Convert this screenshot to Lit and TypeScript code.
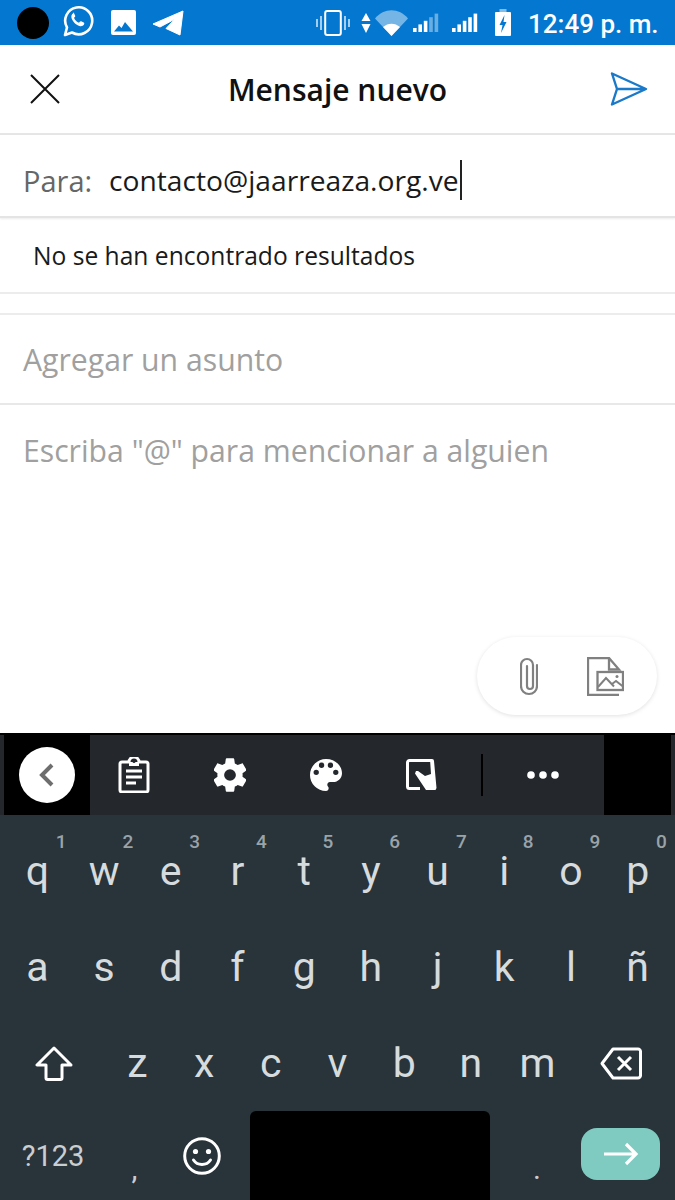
import { LitElement, html, css, svg } from 'lit';
import { customElement } from 'lit/decorators.js';

const row1 = ['q', 'w', 'e', 'r', 't', 'y', 'u', 'i', 'o', 'p'];
const hints = ['1', '2', '3', '4', '5', '6', '7', '8', '9', '0'];
const row2 = ['a', 's', 'd', 'f', 'g', 'h', 'j', 'k', 'l', 'ñ'];
const row3 = ['z', 'x', 'c', 'v', 'b', 'n', 'm'];

const signal = (lit: number) => {
  const bars = [0, 1, 2, 3, 4];
  return svg`${bars.map((i) => {
    const h = 4 + i * 3.6;
    return svg`<rect x=${i * 5.4} y=${19 - h} width="3.6" height=${h} fill="#fff" opacity=${i < lit ? 1 : 0.4}></rect>`;
  })}`;
};

@customElement('app-root')
export class AppRoot extends LitElement {
  static styles = css`
    :host {
      display: block;
      width: 675px;
      height: 1200px;
      overflow: hidden;
      background: #fff;
      font-family: 'Open Sans', 'Noto Sans', sans-serif;
    }

    .page {
      display: flex;
      flex-direction: column;
      height: 1200px;
    }

    svg {
      display: block;
      flex: none;
    }

    /* status bar */
    .status {
      display: flex;
      align-items: center;
      height: 45px;
      flex: none;
      background: #0478d0;
      color: #fff;
    }

    .dot {
      width: 32px;
      height: 32px;
      margin-left: 17px;
      border-radius: 50%;
      background: #000;
    }

    .wa { margin-left: 13px; margin-top: -3px; }
    .gallery { margin-left: 17px; }
    .tg { margin-left: 16px; }
    .vibrate { margin-left: 132px; }
    .updown { margin-left: 11px; }
    .wifi { margin-left: 4px; }
    .sig1 { margin-left: 5px; }
    .sig2 { margin-left: 13px; }
    .batt { margin-left: 17px; }

    .time {
      margin: 2px 0 0 17px;
      font-family: Roboto, sans-serif;
      font-size: 26px;
      font-weight: 500;
      white-space: nowrap;
    }

    /* compose header */
    .head {
      display: flex;
      align-items: center;
      justify-content: space-between;
      height: 88px;
      flex: none;
      padding: 0 27px 0 30px;
      border-bottom: 2px solid #e6e6e6;
    }

    .title {
      margin-left: 5px;
      font-size: 30px;
      font-weight: 600;
      color: #111;
    }

    .field {
      display: flex;
      align-items: center;
      flex: none;
      padding-left: 23px;
      font-size: 30.2px;
    }

    .to {
      height: 72px;
      padding-top: 9px;
      border-bottom: 2px solid #e4e4e4;
      box-shadow: 0 1px 2px rgba(0, 0, 0, 0.08);
    }

    .label {
      width: 86px;
      font-size: 29px;
      color: #666;
    }

    .value {
      font-size: 28.2px;
      color: #1a1a1a;
      padding-right: 1px;
      border-right: 2px solid #222;
      line-height: 40px;
    }

    .none {
      height: 74px;
      padding-left: 33px;
      font-size: 24.6px;
      color: #1a1a1a;
      border-bottom: 2px solid #ececec;
    }

    .spacer {
      height: 19px;
      flex: none;
      border-bottom: 2px solid #ececec;
    }

    .subject {
      height: 87px;
      padding-top: 1px;
      color: #a0a0a0;
      border-bottom: 2px solid #e8e8e8;
    }

    .body {
      flex: 1;
      display: flex;
      flex-direction: column;
      justify-content: space-between;
      padding: 25px 18px 18px 23px;
      font-size: 30.2px;
      color: #a0a0a0;
    }

    .fab {
      display: flex;
      align-items: center;
      align-self: flex-end;
      gap: 49px;
      height: 78px;
      padding: 0 33px 0 43px;
      border-radius: 39px;
      background: #fff;
      box-shadow: 0 1px 4px rgba(0, 0, 0, 0.12);
    }

    /* keyboard */
    .kbd {
      flex: none;
      height: 467px;
      border-top: 2px solid #000;
      box-sizing: border-box;
      background: #29333a;
      color: #d6dbde;
      font-family: Roboto, sans-serif;
    }

    .tools {
      display: flex;
      align-items: center;
      height: 80px;
      padding: 0 4px;
      background: #24282d;
    }

    .back {
      display: flex;
      align-items: center;
      justify-content: center;
      width: 86px;
      height: 80px;
      margin-right: 28px;
      background: #000;
    }

    .back span {
      display: flex;
      align-items: center;
      justify-content: center;
      width: 56px;
      height: 56px;
      border-radius: 50%;
      background: #fff;
    }

    .tool { margin-right: 64px; }
    .touch { margin-right: 43px; }

    .divider {
      width: 2px;
      height: 42px;
      margin-right: 44px;
      background: #000;
    }

    .blackout {
      width: 67px;
      height: 80px;
      margin-left: auto;
      background: #000;
    }

    .row {
      display: grid;
      grid-template-columns: repeat(10, 1fr);
      height: 96px;
      padding: 0 4px;
    }

    .row.third {
      grid-template-columns: 1.5fr repeat(7, 1fr) 1.5fr;
    }

    .key {
      position: relative;
      display: flex;
      align-items: center;
      justify-content: center;
      padding-top: 16px;
      font-size: 41px;
      line-height: 1;
    }

    .hint {
      position: absolute;
      top: 17px;
      right: 3px;
      width: 13px;
      text-align: center;
      font-size: 19px;
      font-weight: 500;
      color: #9aa3a8;
    }

    .bottom {
      display: flex;
      align-items: stretch;
      height: 97px;
    }

    .sym, .comma, .emoji, .period {
      display: flex;
      align-items: center;
      justify-content: center;
      flex: none;
    }

    .sym {
      width: 106px;
      padding-top: 8px;
      font-size: 29px;
      color: #c9ced1;
    }

    .comma, .period {
      width: 67px;
      padding-top: 34px;
      font-size: 30px;
      color: #c9ced1;
    }

    .comma { margin-left: -5px; }
    .emoji { width: 67px; padding-top: 8px; }

    .space {
      width: 240px;
      margin: 8px 14px 0 15px;
      border-radius: 6px 6px 0 0;
      background: #000;
    }

    .period { width: 66px; }

    .enter {
      display: flex;
      align-items: center;
      justify-content: center;
      width: 79px;
      height: 52px;
      margin: 25px 0 0 11px;
      border-radius: 16px;
      background: #7fcbc2;
    }
  `;

  render() {
    return html`
      <div class="page">
        <div class="status">
          <div class="dot"></div>
          <svg class="wa" width="32" height="32" viewBox="0 0 32 32">
            <path d="M3 30l2-7.5A13.5 13.5 0 1 1 10 27.5z" fill="none" stroke="#fff" stroke-width="2.6" stroke-linejoin="round"></path>
            <path d="M11 8.500c-1.500 1-2 2.600-1.500 4.500 1 3.500 4.500 7 8 8 2 .5 3.500 0 4.500-1.500.5-1 .3-1.500-.3-1.900l-2.500-1.300c-.6-.3-1-.1-1.400.4l-.8 1c-2.500-.9-4-2.500-5-5l.9-.8c.4-.4.5-.8.2-1.300l-1.200-2.500c-.3-.6-.9-.7-.9-.6z" fill="#fff"></path>
          </svg>
          <svg class="gallery" width="25" height="25" viewBox="0 0 25 25">
            <rect width="25" height="25" rx="2" fill="#fff"></rect>
            <path d="M3 21.500l5-6 2.500 2.500 3.500-6 8 9.500z" fill="#0478d0"></path>
          </svg>
          <svg class="tg" width="32" height="26" viewBox="0 0 32 26">
            <path d="M1 14L31 1l-3 24-14-6.500 9-9.500-15 8z" fill="#fff" stroke="#fff" stroke-linejoin="round"></path>
          </svg>
          <svg class="vibrate" width="34" height="26" viewBox="0 0 34 26">
            <rect x="9.200" y="1" width="15.600" height="24" rx="2" fill="none" stroke="#fff" stroke-width="2"></rect>
            <path d="M1 9v8M5 6v14M29 6v14M33 9v8" stroke="#fff" stroke-width="1.600" opacity=".8"></path>
          </svg>
          <svg class="updown" width="10" height="20" viewBox="0 0 10 20">
            <path d="M5 0l4.500 8H.5zM5 20L.5 11h9z" fill="#fff"></path>
          </svg>
          <svg class="wifi" width="33" height="26" viewBox="0 0 33 26">
            <path d="M0 8.500C9-2.500 24-2.500 33 8.500L16.500 26z" fill="#fff" opacity=".45"></path>
            <path d="M8 17c5-4.500 12-4.500 17 0l-8.500 9z" fill="#fff"></path>
          </svg>
          <svg class="sig1" width="26" height="19" viewBox="0 0 26 19">${signal(3)}</svg>
          <svg class="sig2" width="26" height="19" viewBox="0 0 26 19">${signal(5)}</svg>
          <svg class="batt" width="16" height="27" viewBox="0 0 16 27">
            <rect x="4.500" width="7" height="3" fill="#fff" opacity=".5"></rect>
            <rect y="3" width="16" height="24" rx="1" fill="#fff"></rect>
            <path d="M9.500 6L4.500 16h3l-1.500 8 5.500-11h-3z" fill="#0478d0"></path>
          </svg>
          <span class="time">12:49 p. m.</span>
        </div>

        <div class="head">
          <svg width="30" height="30" viewBox="0 0 30 30">
            <path d="M1 1l28 28M29 1L1 29" stroke="#111" stroke-width="2" fill="none"></path>
          </svg>
          <span class="title">Mensaje nuevo</span>
          <svg width="38" height="34" viewBox="0 0 38 34">
            <path d="M2 1.500L36 17 2 32.500 7 17zM7 17h29" fill="none" stroke="#1a79c8" stroke-width="2.400" stroke-linejoin="round"></path>
          </svg>
        </div>

        <div class="field to">
          <span class="label">Para:</span>
          <span class="value">contacto@jaarreaza.org.ve</span>
        </div>
        <div class="field none">No se han encontrado resultados</div>
        <div class="spacer"></div>
        <div class="field subject">Agregar un asunto</div>

        <div class="body">
          <span>Escriba "@" para mencionar a alguien</span>
          <div class="fab">
            <svg width="18" height="39" viewBox="0 0 18 39">
              <path d="M17 8v21a8 8 0 0 1-16 0V8a6 6 0 0 1 12 0v21a3 3 0 0 1-6 0V9" fill="none" stroke="#808080" stroke-width="2.200" stroke-linecap="round"></path>
            </svg>
            <svg width="37" height="39" viewBox="0 0 37 39">
              <path d="M32 38H1V1h21l10 11.500H22V1" fill="none" stroke="#808080" stroke-width="2.300"></path>
              <rect x="10.500" y="15" width="25.500" height="18" fill="none" stroke="#808080" stroke-width="2.300"></rect>
              <path d="M11 30l8-9 8 8.500M25 27l4-3 7 5.500" fill="none" stroke="#808080" stroke-width="2"></path>
              <circle cx="30" cy="19.500" r="1.500" fill="#808080"></circle>
            </svg>
          </div>
        </div>

        <div class="kbd">
          <div class="tools">
            <div class="back">
              <span>
                <svg width="18" height="24" viewBox="0 0 18 24">
                  <path d="M14 2L4 12l10 10" fill="none" stroke="#6e6e6e" stroke-width="4"></path>
                </svg>
              </span>
            </div>
            <svg class="tool" width="32" height="36" viewBox="0 0 32 36">
              <path d="M4 5h7a5 5 0 0 1 10 0h7a2 2 0 0 1 2 2v26a2 2 0 0 1-2 2H4a2 2 0 0 1-2-2V7a2 2 0 0 1 2-2z" fill="none" stroke="#fff" stroke-width="3"></path>
              <rect x="11" y="5" width="10" height="4" fill="#fff"></rect>
              <circle cx="16" cy="4.500" r="1.500" fill="#24282d"></circle>
              <path d="M8 14h16M8 20h16M8 26h10" stroke="#fff" stroke-width="3"></path>
            </svg>
            <svg class="tool" width="32" height="34" viewBox="2.500 1.800 19 20.400" preserveAspectRatio="none">
              <path fill="#fff" d="M19.430 12.980c.04-.32.07-.64.070-.98s-.03-.66-.07-.98l2.110-1.650c.19-.15.24-.42.120-.64l-2-3.460c-.12-.22-.39-.3-.61-.22l-2.490 1c-.52-.4-1.080-.73-1.690-.98l-.38-2.650A.488.488 0 0 0 14 2h-4c-.25 0-.46.18-.49.420l-.38 2.650c-.61.25-1.170.59-1.690.98l-2.490-1c-.23-.09-.49 0-.61.220l-2 3.460c-.13.220-.07.490.12.640l2.110 1.650c-.04.320-.07.650-.07.980s.03.660.07.980l-2.110 1.650c-.19.150-.24.420-.12.640l2 3.460c.12.220.39.300.61.220l2.490-1c.52.400 1.080.730 1.690.980l.38 2.650c.03.240.24.420.49.420h4c.25 0 .46-.18.49-.42l.38-2.650c.61-.25 1.170-.59 1.690-.98l2.490 1c.23.090.49 0 .61-.22l2-3.460c.12-.22.07-.49-.12-.64l-2.110-1.650zM12 15.500a3.500 3.500 0 1 1 0-7 3.500 3.500 0 0 1 0 7z"></path>
            </svg>
            <svg class="tool" width="32" height="32" viewBox="3 3 18 18">
              <path fill="#fff" d="M12 3a9 9 0 0 0 0 18c.83 0 1.500-.67 1.500-1.500 0-.39-.15-.74-.39-1.010-.23-.26-.38-.61-.38-.99 0-.83.67-1.500 1.500-1.500H16c2.760 0 5-2.240 5-5 0-4.420-4.030-8-9-8zm-5.500 9a1.500 1.500 0 1 1 0-3 1.500 1.500 0 0 1 0 3zm3-4a1.500 1.500 0 1 1 0-3 1.500 1.500 0 0 1 0 3zm5 0a1.500 1.500 0 1 1 0-3 1.500 1.500 0 0 1 0 3zm3 4a1.500 1.500 0 1 1 0-3 1.500 1.500 0 0 1 0 3z"></path>
            </svg>
            <svg class="tool touch" width="32" height="32" viewBox="0 0 32 32">
              <path d="M14 29.500H3.500a2 2 0 0 1-2-2V3.500a2 2 0 0 1 2-2H25" fill="none" stroke="#fff" stroke-width="3"></path>
              <path d="M24 0h2a2 2 0 0 1 2 2l2.500 27-1 2H20l-2-3-9-13.500 1-2.500h2l7 5 6-2z" fill="#fff"></path>
            </svg>
            <div class="divider"></div>
            <svg width="32" height="8" viewBox="0 0 32 8">
              <circle cx="4" cy="4" r="3.800" fill="#fff"></circle>
              <circle cx="16" cy="4" r="3.800" fill="#fff"></circle>
              <circle cx="28" cy="4" r="3.800" fill="#fff"></circle>
            </svg>
            <div class="blackout"></div>
          </div>

          <div class="row">
            ${row1.map((k, i) => html`<div class="key">${k}<span class="hint">${hints[i]}</span></div>`)}
          </div>
          <div class="row">
            ${row2.map((k) => html`<div class="key">${k}</div>`)}
          </div>
          <div class="row third">
            <div class="key">
              <svg width="38" height="35" viewBox="0 0 38 35">
                <path d="M19 2L2 19h9v13a1.500 1.500 0 0 0 1.500 1.500h13A1.500 1.500 0 0 0 27 32V19h9z" fill="none" stroke="#fff" stroke-width="3" stroke-linejoin="round"></path>
              </svg>
            </div>
            ${row3.map((k) => html`<div class="key">${k}</div>`)}
            <div class="key">
              <svg width="42" height="33" viewBox="0 0 42 33">
                <path d="M13 2h25a2.500 2.500 0 0 1 2.500 2.500v24a2.500 2.500 0 0 1-2.500 2.500H13L2 16.500z" fill="none" stroke="#fff" stroke-width="3" stroke-linejoin="round"></path>
                <path d="M18 10l13 13M31 10L18 23" stroke="#fff" stroke-width="3"></path>
              </svg>
            </div>
          </div>
          <div class="bottom">
            <div class="sym">?123</div>
            <div class="comma">,</div>
            <div class="emoji">
              <svg width="38" height="38" viewBox="0 0 38 38">
                <circle cx="19" cy="19" r="17.300" fill="none" stroke="#fff" stroke-width="3"></circle>
                <circle cx="12.500" cy="14.500" r="2.600" fill="#fff"></circle>
                <circle cx="25.500" cy="14.500" r="2.600" fill="#fff"></circle>
                <path d="M10.500 23c4 6 13 6 17 0" fill="none" stroke="#fff" stroke-width="3" stroke-linecap="round"></path>
              </svg>
            </div>
            <div class="space"></div>
            <div class="period">.</div>
            <div class="enter">
              <svg width="36" height="24" viewBox="0 0 36 24">
                <path d="M1 12h32M23 2l10 10-10 10" fill="none" stroke="#fff" stroke-width="3.200"></path>
              </svg>
            </div>
          </div>
        </div>
      </div>
    `;
  }
}

declare global {
  interface HTMLElementTagNameMap {
    'app-root': AppRoot;
  }
}
